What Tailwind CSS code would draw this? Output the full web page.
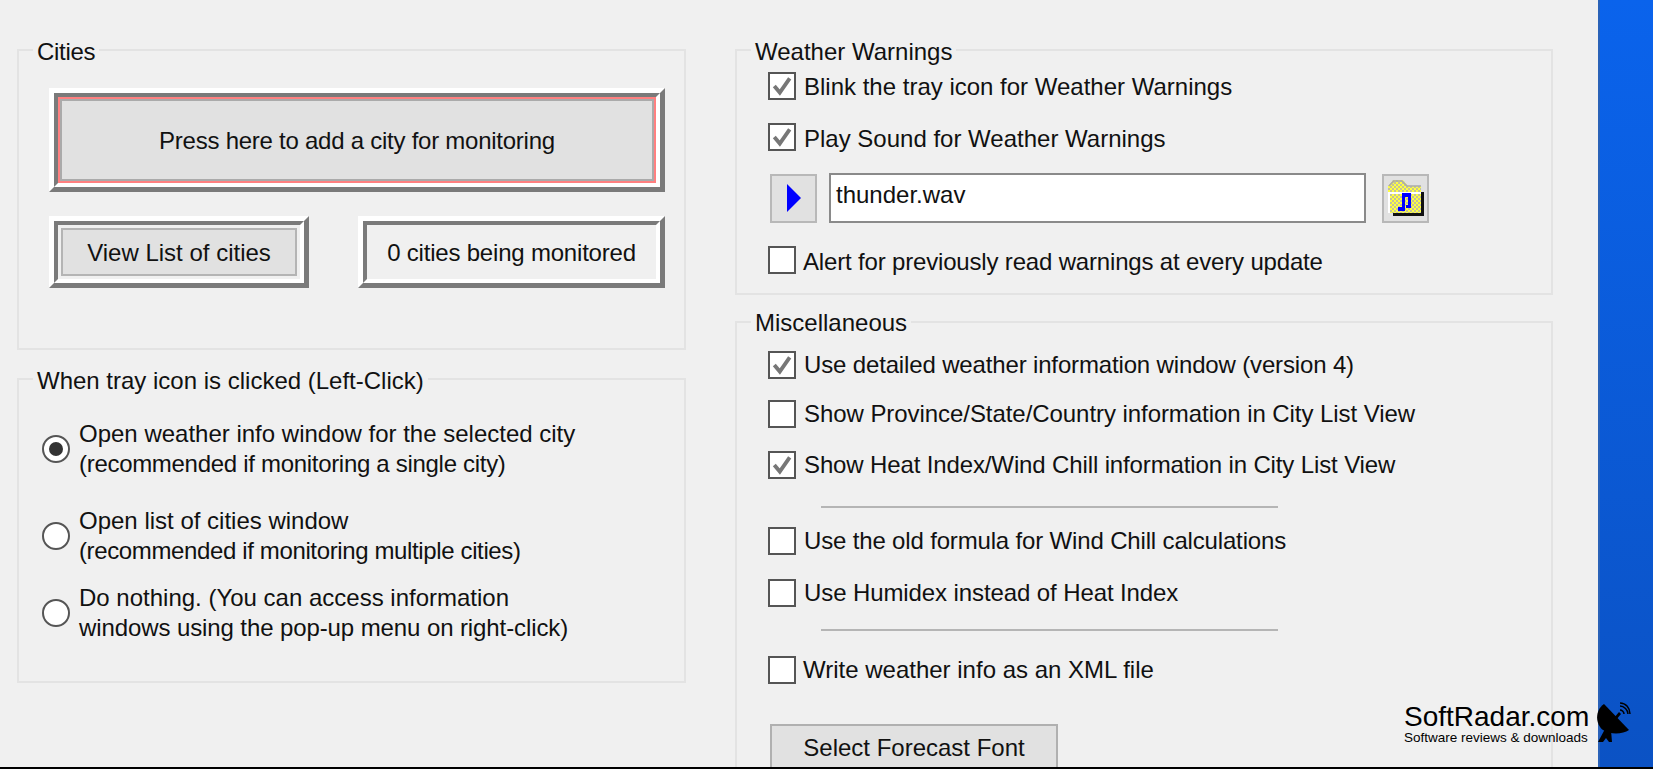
<!DOCTYPE html>
<html lang="en">
<head>
  <meta charset="UTF-8" />
  <title>Weather options</title>
  <script src="https://cdn.jsdelivr.net/npm/@tailwindcss/browser@4"></script>
</head>
<body class="h-[769px] w-[1653px] overflow-hidden bg-[#f0f0f0] font-['Liberation_Sans',sans-serif] text-[24px] leading-[30px] text-[#111]">
  <div class="relative flex h-full border-b-2 border-black">
    <main class="flex w-[1598px] shrink-0 overflow-hidden pl-[17px] pt-[35px]">

      <!-- left column -->
      <div class="w-[669px] shrink-0">
        <fieldset class="h-[315px] border-2 border-[#e3e3e3]">
          <legend class="ml-[14px] px-1"><span class="inline-block translate-y-0.5 tracking-[-0.3px]">Cities</span></legend>
          <div class="pl-[30px] pt-[23px]">
            <div class="h-[104px] w-[616px] border-[5px] border-t-white border-l-white border-r-[#7a7a7a] border-b-[#7a7a7a]">
              <div class="h-full border-4 border-t-[#7a7a7a] border-l-[#7a7a7a] border-r-white border-b-white">
                <div class="h-full border-2 border-[#ff8080]">
                  <div class="flex h-full items-center justify-center border-2 border-[#aaa] bg-[#e1e1e1] pt-[2px] tracking-[-0.25px]">Press here to add a city for monitoring</div>
                </div>
              </div>
            </div>
            <div class="mt-6 flex w-[616px] justify-between">
              <div class="h-[72px] w-[260px] border-[5px] border-t-white border-l-white border-r-[#7a7a7a] border-b-[#7a7a7a]">
                <div class="h-full border-4 border-t-[#7a7a7a] border-l-[#7a7a7a] border-r-white border-b-white p-[3px]">
                  <div class="flex h-full items-center justify-center border-2 border-[#b4b4b4] bg-[#e1e1e1] pt-[2px]">View List of cities</div>
                </div>
              </div>
              <div class="h-[72px] w-[307px] border-[5px] border-t-white border-l-white border-r-[#7a7a7a] border-b-[#7a7a7a]">
                <div class="flex h-full items-center justify-center border-4 border-t-[#7a7a7a] border-l-[#7a7a7a] border-r-white border-b-white pt-[2px] tracking-[-0.2px]">0 cities being monitored</div>
              </div>
            </div>
          </div>
        </fieldset>

        <fieldset class="mt-[14px] h-[319px] border-2 border-[#e3e3e3]">
          <legend class="ml-[14px] px-1"><span class="inline-block translate-y-0.5">When tray icon is clicked (Left-Click)</span></legend>
          <div class="pl-[23px] pt-[25px]">
            <div class="flex items-center gap-[9px]">
              <span class="flex h-7 w-7 items-center justify-center rounded-full border-2 border-[#555] bg-white"><span class="h-[14px] w-[14px] rounded-full bg-[#333]"></span></span>
              <span class="whitespace-nowrap">Open weather info window for the selected city<br /><span class="tracking-[-0.3px]">(recommended if monitoring a single city)</span></span>
            </div>
            <div class="mt-[27px] flex items-center gap-[9px]">
              <span class="h-7 w-7 rounded-full border-2 border-[#555] bg-white"></span>
              <span class="whitespace-nowrap">Open list of cities window<br /><span class="tracking-[-0.37px]">(recommended if monitoring multiple cities)</span></span>
            </div>
            <div class="mt-[17px] flex items-center gap-[9px]">
              <span class="h-7 w-7 rounded-full border-2 border-[#555] bg-white"></span>
              <span class="whitespace-nowrap">Do nothing. (You can access information<br /><span class="tracking-[-0.1px]">windows using the pop-up menu on right-click)</span></span>
            </div>
          </div>
        </fieldset>
      </div>

      <!-- right column -->
      <div class="ml-[49px] w-[818px] shrink-0">
        <fieldset class="h-[260px] border-2 border-[#e3e3e3]">
          <legend class="ml-[14px] px-1"><span class="inline-block translate-y-0.5">Weather Warnings</span></legend>
          <div class="pl-[31px] pt-[7px]">
            <div class="flex h-7 items-center gap-2">
              <span class="flex h-7 w-7 items-center justify-center border-2 border-[#555] bg-white">
                <svg class="h-[22px] w-[22px]" viewBox="0 0 20 20" fill="none" stroke="#777" stroke-width="3.5"><path d="M3 10l5 6 9-13" /></svg>
              </span>
              <span class="whitespace-nowrap pt-[2px]">Blink the tray icon for Weather Warnings</span>
            </div>
            <div class="mt-[23px] flex h-7 items-center gap-2">
              <span class="flex h-7 w-7 items-center justify-center border-2 border-[#555] bg-white">
                <svg class="h-[22px] w-[22px]" viewBox="0 0 20 20" fill="none" stroke="#777" stroke-width="3.5"><path d="M3 10l5 6 9-13" /></svg>
              </span>
              <span class="whitespace-nowrap pt-1">Play Sound for Weather Warnings</span>
            </div>
            <div class="ml-[2px] mt-[22px] flex items-center">
              <div class="flex h-[49px] w-[47px] items-center justify-center border-2 border-[#b8b8b8] bg-[#e1e1e1]">
                <svg class="h-7 w-[14px]" viewBox="0 0 14 28"><path fill="#0000ff" d="M0 0l14 14L0 28z" /></svg>
              </div>
              <div class="ml-3 h-[50px] w-[537px] border-2 border-[#8a8a8a] bg-white pl-[5px] pt-[5px]">thunder.wav</div>
              <div class="ml-[16px] flex h-[49px] w-[47px] items-center justify-center border-2 border-[#b8b8b8] bg-[#e1e1e1]">
                <svg class="h-9 w-9" viewBox="0 0 36 36">
                  <defs>
                    <pattern id="chk" width="4" height="4" patternUnits="userSpaceOnUse">
                      <rect width="4" height="4" fill="#ffff40" />
                      <rect width="2" height="2" fill="#c4c49a" />
                      <rect x="2" y="2" width="2" height="2" fill="#c4c49a" />
                    </pattern>
                  </defs>
                  <path fill="#111" d="M5 12h31v24H5z" />
                  <path fill="url(#chk)" d="M0 33V6l5-6h10l5 6h13v27z" />
                  <path fill="none" stroke="#aaa" stroke-width="1.5" d="M1 6l5-5h8l5 5h14" />
                  <path fill="none" stroke="#fff" stroke-width="2" d="M1 33V13h32" />
                  <path fill="#0000ff" d="M14 13h9v15h-5v-3h2v-8h-3v14h-7v-4h4z" />
                </svg>
              </div>
            </div>
            <div class="mt-[23px] flex h-7 items-center gap-[7px]">
              <span class="h-7 w-7 border-2 border-[#555] bg-white"></span>
              <span class="whitespace-nowrap pt-1 tracking-[-0.17px]">Alert for previously read warnings at every update</span>
            </div>
          </div>
        </fieldset>

        <fieldset class="mt-[12px] h-[500px] border-2 border-[#e3e3e3]">
          <legend class="ml-[14px] px-1"><span class="inline-block translate-y-px">Miscellaneous</span></legend>
          <div class="pl-[31px] pt-[14px]">
            <div class="flex h-7 items-center gap-2">
              <span class="flex h-7 w-7 items-center justify-center border-2 border-[#555] bg-white">
                <svg class="h-[22px] w-[22px]" viewBox="0 0 20 20" fill="none" stroke="#777" stroke-width="3.5"><path d="M3 10l5 6 9-13" /></svg>
              </span>
              <span class="whitespace-nowrap tracking-[-0.15px]">Use detailed weather information window (version 4)</span>
            </div>
            <div class="mt-[21px] flex h-7 items-center gap-2">
              <span class="h-7 w-7 border-2 border-[#555] bg-white"></span>
              <span class="whitespace-nowrap tracking-[-0.06px]">Show Province/State/Country information in City List View</span>
            </div>
            <div class="mt-[23px] flex h-7 items-center gap-2">
              <span class="flex h-7 w-7 items-center justify-center border-2 border-[#555] bg-white">
                <svg class="h-[22px] w-[22px]" viewBox="0 0 20 20" fill="none" stroke="#777" stroke-width="3.5"><path d="M3 10l5 6 9-13" /></svg>
              </span>
              <span class="whitespace-nowrap tracking-[-0.13px]">Show Heat Index/Wind Chill information in City List View</span>
            </div>
            <div class="ml-[53px] mt-[27px] h-[2px] w-[457px] bg-[#b5b5b5]"></div>
            <div class="mt-[19px] flex h-7 items-center gap-2">
              <span class="h-7 w-7 border-2 border-[#555] bg-white"></span>
              <span class="whitespace-nowrap tracking-[-0.16px]">Use the old formula for Wind Chill calculations</span>
            </div>
            <div class="mt-[24px] flex h-7 items-center gap-2">
              <span class="h-7 w-7 border-2 border-[#555] bg-white"></span>
              <span class="whitespace-nowrap tracking-[-0.1px]">Use Humidex instead of Heat Index</span>
            </div>
            <div class="ml-[53px] mt-[22px] h-[2px] w-[457px] bg-[#b5b5b5]"></div>
            <div class="mt-[25px] flex h-7 items-center gap-[7px]">
              <span class="h-7 w-7 border-2 border-[#555] bg-white"></span>
              <span class="whitespace-nowrap">Write weather info as an XML file</span>
            </div>
            <div class="ml-[2px] mt-[40px] flex h-[60px] w-[288px] justify-center border-2 border-[#b0b0b0] bg-[#e1e1e1] pt-[7px]">Select Forecast Font</div>
          </div>
        </fieldset>
      </div>
    </main>

    <!-- desktop behind the window -->
    <div class="flex-1 border-l-2 border-[#2a62b8] bg-linear-to-b from-[#0a63ec] to-[#0b52c4]"></div>

    <!-- watermark -->
    <div class="absolute left-[1404px] top-[703px] flex items-start gap-[8px]">
      <div>
        <div class="text-[28px] leading-[28px] text-black">SoftRadar.com</div>
        <div class="text-[13.5px] leading-[14px] text-black">Software reviews &amp; downloads</div>
      </div>
      <svg class="-mt-px h-10 w-[34px]" viewBox="0 0 34 40">
        <path fill="#000" d="M7 2C-2 8-2 22 6 28c8 5 20 4 26 0z" />
        <path fill="#000" d="M1 40l7-13 6 1 1 12h-3l-3-4-3 4z" />
        <path fill="#000" d="M17 16l5-6 2 2-5 6z" />
        <path fill="none" stroke="#000" stroke-width="1.5" d="M23 8c2 0 4 2 4 4M23 4c4 0 8 4 8 8M23 1c6 0 10 5 10 11" />
      </svg>
    </div>
  </div>
</body>
</html>
